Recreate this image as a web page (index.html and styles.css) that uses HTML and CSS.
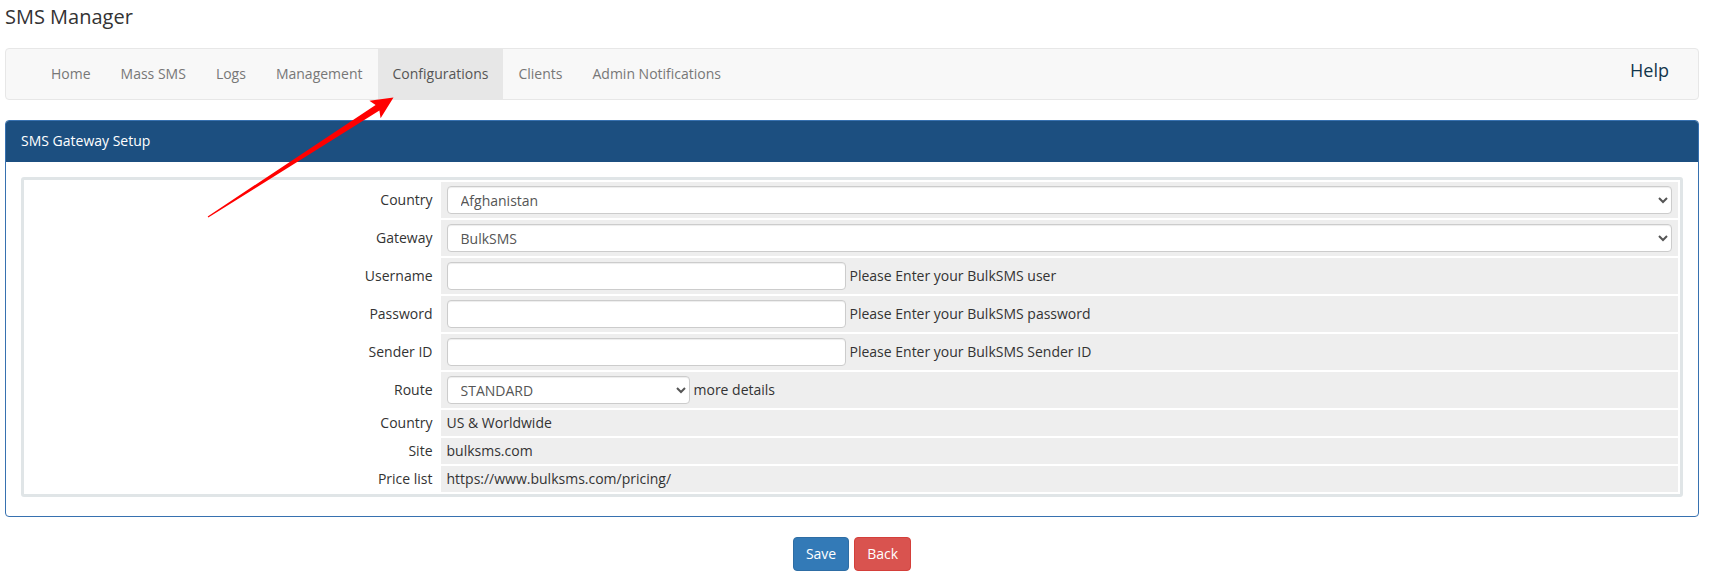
FILE: index.html
```html
<!DOCTYPE html>
<html lang="en">
<head>
<meta charset="utf-8">
<title>SMS Manager</title>
<link rel="stylesheet" href="styles.css">
</head>
<body>
<div class="page">
  <h1 class="title">SMS Manager</h1>

  <nav class="navbar">
    <ul class="nav-links">
      <li><a class="nav-link" href="#">Home</a></li>
      <li><a class="nav-link" href="#">Mass SMS</a></li>
      <li><a class="nav-link" href="#">Logs</a></li>
      <li><a class="nav-link" href="#">Management</a></li>
      <li><a class="nav-link active" href="#">Configurations</a></li>
      <li><a class="nav-link" href="#">Clients</a></li>
      <li><a class="nav-link" href="#">Admin Notifications</a></li>
    </ul>
    <a class="help" href="#">Help</a>
  </nav>

  <section class="panel">
    <div class="panel-heading">SMS Gateway Setup</div>
    <div class="panel-body">
      <table class="form">
        <tr class="row-input">
          <td class="label">Country</td>
          <td class="value"><div class="field"><select class="control select-full"><option>Afghanistan</option></select></div></td>
        </tr>
        <tr class="row-input">
          <td class="label">Gateway</td>
          <td class="value"><div class="field"><select class="control select-full"><option>BulkSMS</option></select></div></td>
        </tr>
        <tr class="row-input">
          <td class="label">Username</td>
          <td class="value"><div class="field"><input class="control text-input" type="text"><span>Please Enter your BulkSMS user</span></div></td>
        </tr>
        <tr class="row-input">
          <td class="label">Password</td>
          <td class="value"><div class="field"><input class="control text-input" type="password"><span>Please Enter your BulkSMS password</span></div></td>
        </tr>
        <tr class="row-input">
          <td class="label">Sender ID</td>
          <td class="value"><div class="field"><input class="control text-input" type="text"><span>Please Enter your BulkSMS Sender ID</span></div></td>
        </tr>
        <tr class="row-input">
          <td class="label">Route</td>
          <td class="value"><div class="field"><select class="control select-route"><option>STANDARD</option></select><span>more details</span></div></td>
        </tr>
        <tr class="row-text">
          <td class="label">Country</td>
          <td class="value">US &amp; Worldwide</td>
        </tr>
        <tr class="row-text">
          <td class="label">Site</td>
          <td class="value">bulksms.com</td>
        </tr>
        <tr class="row-text">
          <td class="label">Price list</td>
          <td class="value">https://www.bulksms.com/pricing/</td>
        </tr>
      </table>
    </div>
  </section>

  <div class="actions">
    <button class="btn btn-primary" type="button">Save</button>
    <button class="btn btn-danger" type="button">Back</button>
  </div>
</div>

<svg class="annotation" width="1710" height="588" viewBox="0 0 1710 588" aria-hidden="true">
  <polygon fill="#ff0000" points="393.5,97.5 380.6,118.2 379.4,110.6 208.3,217.6 207.7,216.4 375.6,104.9 369.4,100.8"/>
</svg>
</body>
</html>
```

FILE: styles.css
```css
html, body {
  margin: 0;
  padding: 0;
  background: #ffffff;
}

body {
  position: relative;
  font-family: "Open Sans", "Liberation Sans", sans-serif;
  font-size: 14px;
  color: #333333;
}

.page {
  padding: 3px 11px 0 5px;
}

.title {
  margin: 0 0 18px 0;
  font-size: 20px;
  line-height: 27px;
  font-weight: 400;
  color: #333333;
}

/* Navbar */
.navbar {
  display: flex;
  align-items: flex-start;
  justify-content: space-between;
  min-height: 50px;
  background: #f8f8f8;
  border: 1px solid #e7e7e7;
  border-radius: 4px;
  margin-bottom: 20px;
  padding: 0 29px 0 30px;
}

.nav-links {
  display: flex;
  list-style: none;
  margin: 0;
  padding: 0;
}

.nav-link {
  display: block;
  padding: 0 15px;
  line-height: 50px;
  font-size: 14px;
  color: #777777;
  text-decoration: none;
}

.nav-link.active {
  background: #e7e7e7;
  color: #555555;
}

.help {
  font-size: 18px;
  line-height: 42px;
  color: #12364c;
  text-decoration: none;
}

/* Panel */
.panel {
  border: 1px solid #3771b0;
  border-radius: 4px;
  margin-bottom: 20px;
}

.panel-heading {
  background: #1c4f80;
  color: #ffffff;
  font-size: 14px;
  line-height: 20px;
  padding: 10px 15px;
  border-bottom: 1px solid #1c4f80;
  border-radius: 3px 3px 0 0;
}

.panel-body {
  padding: 15px 15px 19px 15px;
}

/* Form table */
.form {
  width: 100%;
  border: 3px solid #e0e5e7;
  border-radius: 3px;
  border-spacing: 2px;
}

.form td {
  padding: 4px 6px;
  line-height: 18px;
  vertical-align: middle;
}

.form .label {
  width: 25%;
  text-align: right;
  color: #333333;
  background: #ffffff;
}

.form .value {
  background: #eeeeee;
  color: #333333;
}

.field {
  display: flex;
  align-items: center;
  gap: 4px;
}

.control {
  box-sizing: border-box;
  height: 28px;
  border: 1px solid #cccccc;
  border-radius: 4px;
  background-color: #ffffff;
  box-shadow: inset 0 1px 1px rgba(0, 0, 0, 0.075);
  font-family: "Open Sans", "Liberation Sans", sans-serif;
  font-size: 14px;
  color: #555555;
  margin: 0;
}

select.control {
  padding: 0 6px 0 9px;
}

.select-full {
  width: 100%;
}

.select-route {
  width: 243px;
}

.text-input {
  width: 399px;
  padding: 4px 10px;
}

/* Buttons */
.actions {
  display: flex;
  justify-content: center;
  gap: 5px;
}

.btn {
  font-family: "Open Sans", "Liberation Sans", sans-serif;
  font-size: 14px;
  line-height: 20px;
  padding: 6px 12px;
  border: 1px solid transparent;
  border-radius: 4px;
  color: #ffffff;
  cursor: pointer;
}

.btn-primary {
  background: #337ab7;
  border-color: #2e6da4;
}

.btn-danger {
  background: #d9534f;
  border-color: #d43f3a;
}

/* Annotation overlay */
.annotation {
  position: absolute;
  top: 0;
  left: 0;
  pointer-events: none;
}
```
